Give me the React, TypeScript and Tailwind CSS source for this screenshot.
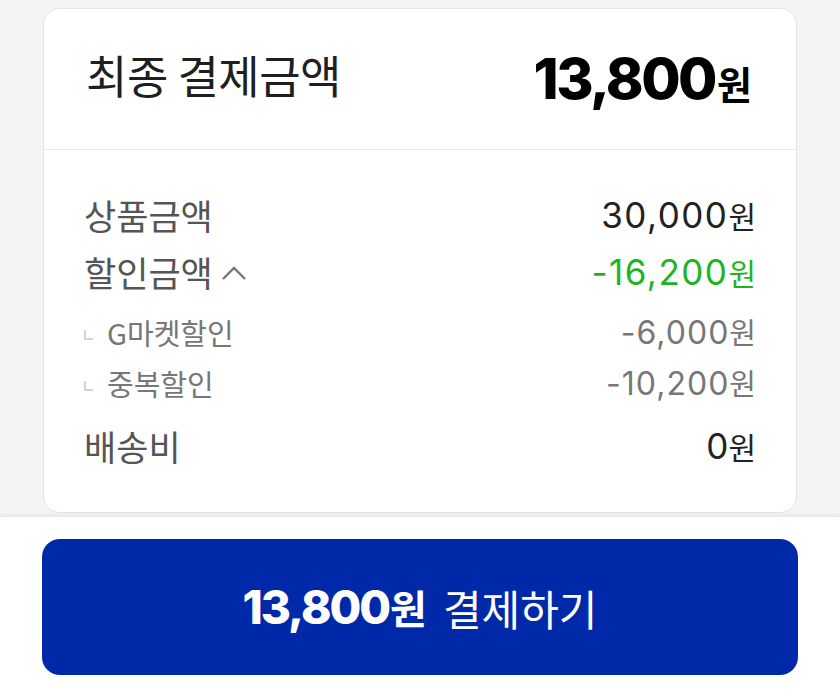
import React from "react";

const KR = { fontFamily: '"Noto Sans CJK KR", "Noto Sans", sans-serif' };
const NUM = { fontFamily: 'Inter, "Noto Sans CJK KR", sans-serif' };

function Won({ cls }: { cls: string }) {
  return (
    <span className={cls} style={KR}>
      원
    </span>
  );
}

function SubMark() {
  return <span className="inline-block w-[9px] h-[10px] border-l-2 border-b-2 border-[#d4d4d4] mr-[14px] mt-[4px]" />;
}

export default function App() {
  return (
    <div className="w-[840px] h-[696px] bg-[#f4f4f4] flex flex-col overflow-hidden">
      <div className="px-[43px] pt-[8px]">
        <div className="h-[505px] bg-white border border-[#e3e3e3] rounded-[17px] flex flex-col">
          <div className="h-[141px] flex items-center justify-between pl-[42px] pr-[44px] border-b border-[#e8e8e8]">
            <span className="text-[45px] text-[#1f1f1f] tracking-[-0.5px] -mt-[8px]" style={KR}>
              최종 결제금액
            </span>
            <span className="flex items-baseline text-black">
              <span className="text-[57px] font-extrabold tracking-[-2.5px]" style={NUM}>
                13,800
              </span>
              <Won cls="text-[38px] font-bold ml-[2px]" />
            </span>
          </div>
          <div className="flex flex-col px-[40px]">
            <div className="h-[40px] mt-[45px] flex items-center justify-between">
              <span className="text-[35px] text-[#555]" style={KR}>상품금액</span>
              <span className="flex items-baseline text-[#222]">
                <span className="text-[35px] tracking-[1.5px]" style={NUM}>30,000</span>
                <Won cls="text-[30px]" />
              </span>
            </div>
            <div className="h-[40px] mt-[17px] flex items-center justify-between">
              <span className="flex items-center text-[35px] text-[#555]" style={KR}>
                할인금액
                <svg width="26" height="16" viewBox="0 0 26 16" className="ml-[8px] mt-[2px]">
                  <path d="M2 14 L13 3 L24 14" fill="none" stroke="#777" strokeWidth="2.4" />
                </svg>
              </span>
              <span className="flex items-baseline text-[#1fb31f]">
                <span className="text-[35px] tracking-[1.5px]" style={NUM}>-16,200</span>
                <Won cls="text-[30px]" />
              </span>
            </div>
            <div className="h-[40px] mt-[21px] flex items-center justify-between">
              <span className="flex items-center text-[29px] text-[#777]" style={KR}>
                <SubMark />
                G마켓할인
              </span>
              <span className="flex items-baseline text-[#777]">
                <span className="text-[32px] tracking-[1px]" style={NUM}>-6,000</span>
                <Won cls="text-[29px]" />
              </span>
            </div>
            <div className="h-[40px] mt-[11px] flex items-center justify-between">
              <span className="flex items-center text-[29px] text-[#777]" style={KR}>
                <SubMark />
                중복할인
              </span>
              <span className="flex items-baseline text-[#777]">
                <span className="text-[32px] tracking-[1px]" style={NUM}>-10,200</span>
                <Won cls="text-[29px]" />
              </span>
            </div>
            <div className="h-[40px] mt-[22px] flex items-center justify-between">
              <span className="text-[35px] text-[#555]" style={KR}>배송비</span>
              <span className="flex items-baseline text-[#222]">
                <span className="text-[35px]" style={NUM}>0</span>
                <Won cls="text-[30px]" />
              </span>
            </div>
          </div>
        </div>
      </div>
      <div className="mt-[4px] flex-1 bg-white shadow-[0_-2px_4px_rgba(0,0,0,0.06)] px-[42px] pt-[22px]">
        <button className="w-[756px] h-[136px] bg-[#0029a9] rounded-[18px] flex items-center justify-center text-white">
          <span className="text-[46px] font-extrabold tracking-[-2px]" style={NUM}>13,800</span>
          <span className="text-[40px] font-bold ml-[1px]" style={KR}>원</span>
          <span className="text-[42px] ml-[16px]" style={KR}>결제하기</span>
        </button>
      </div>
    </div>
  );
}
